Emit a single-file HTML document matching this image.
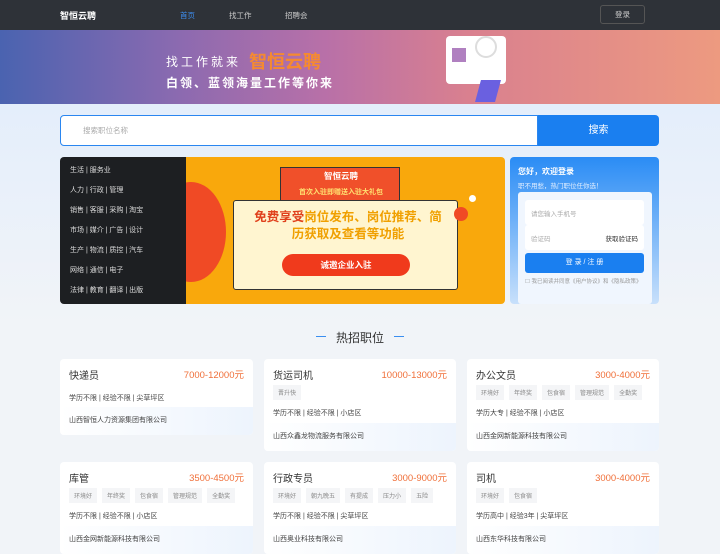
<!DOCTYPE html><html><head><meta charset="utf-8"><style>
*{margin:0;padding:0;box-sizing:border-box}
body{width:720px;height:540px;overflow:hidden;background:#f1f4f8;font-family:"Liberation Sans","Noto Sans CJK SC",sans-serif;position:relative;font-size:8px;color:#333}
.a{position:absolute}
.nav{left:0;top:0;width:720px;height:30px;background:#2e3238;color:#ccc}
.ban{left:0;top:30px;width:720px;height:74px;background:linear-gradient(90deg,#4a63b0 0%,#8c6ab0 25%,#b870a8 45%,#d9808f 65%,#ed9a80 100%)}
.card{background:#fff;border-radius:4px;overflow:hidden}
.card .t{position:absolute;left:9px;top:8px;font-size:10px;color:#333}
.card .p{position:absolute;right:9px;top:8px;font-size:9.5px;color:#f0703a}
.tags{position:absolute;left:9px;top:26px;display:flex;gap:5px}
.tags span{background:#f4f5f7;color:#888;font-size:6px;padding:3px 5px}
.info{position:absolute;left:9px;font-size:7px;color:#444}
.co{position:absolute;left:0;right:0;bottom:0;height:28px;background:linear-gradient(90deg,#fff,#edf4fd);font-size:7px;color:#444;padding:0 9px;line-height:28px}
.cat{left:70px;font-size:7px;color:#ddd}
</style></head><body>
<div class="a" style="left:0;top:104px;width:720px;height:220px;background:linear-gradient(180deg,#e4eefb,#f1f4f8)"></div>
<div class="a nav">
<div class="a" style="left:60px;top:9px;font-size:9px;font-weight:bold;color:#fff">智恒云聘</div>
<div class="a" style="left:180px;top:10px;font-size:7.5px;color:#3d8ef0">首页</div>
<div class="a" style="left:229px;top:10px;font-size:7.5px">找工作</div>
<div class="a" style="left:285px;top:10px;font-size:7.5px">招聘会</div>
<div class="a" style="left:600px;top:5px;width:45px;height:19px;border:1px solid #555;border-radius:3px;text-align:center;line-height:17px;font-size:7.5px">登录</div>
</div>
<div class="a ban">
<div class="a" style="left:166px;top:23px;font-size:12px;color:#fff;letter-spacing:3px">找工作就来</div>
<div class="a" style="left:249px;top:18px;font-size:18px;font-weight:bold;color:#f58a30">智恒云聘</div>
<div class="a" style="left:166px;top:44px;font-size:12px;color:#fff;font-weight:bold;letter-spacing:2px">白领、蓝领海量工作等你来</div>
<div class="a" style="left:446px;top:6px;width:60px;height:48px;background:#fff;border-radius:4px"></div>
<div class="a" style="left:475px;top:6px;width:22px;height:22px;border:2px solid #ddd;border-radius:50%"></div>
<div class="a" style="left:452px;top:18px;width:14px;height:14px;background:#b080c0"></div>
<div class="a" style="left:478px;top:50px;width:20px;height:22px;background:#6a60e0;transform:skewX(-15deg)"></div>
</div>
<div class="a" style="left:60px;top:115px;width:478px;height:31px;background:#fff;border:1px solid #2a86f0;border-radius:4px 0 0 4px;padding:9px 22px;font-size:7.5px;color:#aaa">搜索职位名称</div>
<div class="a" style="left:538px;top:115px;width:121px;height:31px;background:#1a7ff0;border-radius:0 4px 4px 0;color:#fff;text-align:center;line-height:31px;font-size:10px">搜索</div>
<div class="a" style="left:60px;top:157px;width:126px;height:147px;background:#1d1f22;border-radius:4px 0 0 4px"></div>
<div class="a cat" style="top:165px">生活 | 服务业</div>
<div class="a cat" style="top:185px">人力 | 行政 | 管理</div>
<div class="a cat" style="top:205px">销售 | 客服 | 采购 | 淘宝</div>
<div class="a cat" style="top:225px">市场 | 媒介 | 广告 | 设计</div>
<div class="a cat" style="top:245px">生产 | 物流 | 质控 | 汽车</div>
<div class="a cat" style="top:265px">网络 | 通信 | 电子</div>
<div class="a cat" style="top:285px">法律 | 教育 | 翻译 | 出版</div>
<div class="a" style="left:186px;top:157px;width:319px;height:147px;background:#f9a80c;border-radius:0 4px 4px 0;overflow:hidden">
<div class="a" style="left:-30px;top:25px;width:70px;height:100px;border-radius:50%;background:#f04a25"></div>
<div class="a" style="left:94px;top:10px;width:120px;height:42px;background:#f0502a;border:1px solid #333"></div>
<div class="a" style="left:120px;top:13px;font-size:8.5px;color:#fff;font-weight:bold;width:70px;text-align:center">智恒云聘</div>
<div class="a" style="left:100px;top:30px;font-size:7px;color:#ffe070;font-weight:bold;width:110px;text-align:center">首次入驻即赠送入驻大礼包</div>
<div class="a" style="left:47px;top:43px;width:225px;height:90px;background:#fff5d0;border:1.5px solid #333;border-radius:3px"></div>
<div class="a" style="left:64px;top:52px;font-size:12.5px;font-weight:bold;color:#e0401c;width:196px;text-align:center;line-height:17px">免费享受<span style="color:#f0a000">岗位发布、岗位推荐、简历获取及查看等功能</span></div>
<div class="a" style="left:96px;top:97px;width:128px;height:22px;background:#f03a1c;border-radius:11px;color:#fff;font-size:8.5px;font-weight:bold;text-align:center;line-height:22px">诚邀企业入驻</div>
<div class="a" style="left:283px;top:38px;width:7px;height:7px;border-radius:50%;background:#fff"></div>
<div class="a" style="left:268px;top:50px;width:14px;height:14px;border-radius:50%;background:#f04a25"></div>
</div>
<div class="a" style="left:510px;top:157px;width:149px;height:147px;background:linear-gradient(180deg,#2a8cf5,#c8e0fb);border-radius:4px">
<div class="a" style="left:8px;top:9px;font-size:8px;color:#fff;font-weight:bold">您好，欢迎登录</div>
<div class="a" style="left:8px;top:23px;font-size:6.5px;color:#e0eeff">职不用愁，热门职位任你选！</div>
<div class="a" style="left:8px;top:35px;width:134px;height:112px;background:#f0f6fe;border-radius:3px"></div>
<div class="a" style="left:15px;top:43px;width:119px;height:25px;background:#fff;border-radius:3px;padding:8px 6px;font-size:6.5px;color:#aaa">请您输入手机号</div>
<div class="a" style="left:15px;top:68px;width:119px;height:25px;background:#fff;border-radius:3px;padding:8px 6px;font-size:6.5px;color:#aaa">验证码<span style="float:right;color:#333">获取验证码</span></div>
<div class="a" style="left:15px;top:96px;width:119px;height:20px;background:#1a7ff0;border-radius:3px;color:#fff;font-size:7px;text-align:center;line-height:20px">登 录 / 注 册</div>
<div class="a" style="left:15px;top:120px;font-size:5.5px;color:#999;width:120px">☐ 我已阅读并同意《用户协议》和《隐私政策》</div>
</div>
<div class="a" style="left:316px;top:336px;width:10px;height:1px;background:#3a8ef0"></div>
<div class="a" style="left:394px;top:336px;width:10px;height:1px;background:#3a8ef0"></div>
<div class="a" style="left:336px;top:329px;font-size:12px;color:#333">热招职位</div>

<div class="a card" style="left:60px;top:359px;width:193px;height:76px"><div class="t">快递员</div><div class="p">7000-12000元</div><div class="info" style="top:34px">学历不限 | 经验不限 | 尖草坪区</div><div class="co">山西智恒人力资源集团有限公司</div></div>
<div class="a card" style="left:264px;top:359px;width:192px;height:92px"><div class="t">货运司机</div><div class="p">10000-13000元</div><div class="tags"><span>晋升快</span></div><div class="info" style="top:49px">学历不限 | 经验不限 | 小店区</div><div class="co">山西众鑫龙物流服务有限公司</div></div>
<div class="a card" style="left:467px;top:359px;width:192px;height:92px"><div class="t">办公文员</div><div class="p">3000-4000元</div><div class="tags"><span>环境好</span><span>年终奖</span><span>包食宿</span><span>管理规范</span><span>全勤奖</span></div><div class="info" style="top:49px">学历大专 | 经验不限 | 小店区</div><div class="co">山西金网新能源科技有限公司</div></div>
<div class="a card" style="left:60px;top:462px;width:193px;height:92px"><div class="t">库管</div><div class="p">3500-4500元</div><div class="tags"><span>环境好</span><span>年终奖</span><span>包食宿</span><span>管理规范</span><span>全勤奖</span></div><div class="info" style="top:49px">学历不限 | 经验不限 | 小店区</div><div class="co">山西金网新能源科技有限公司</div></div>
<div class="a card" style="left:264px;top:462px;width:192px;height:92px"><div class="t">行政专员</div><div class="p">3000-9000元</div><div class="tags"><span>环境好</span><span>朝九晚五</span><span>有提成</span><span>压力小</span><span>五险</span></div><div class="info" style="top:49px">学历不限 | 经验不限 | 尖草坪区</div><div class="co">山西奥业科技有限公司</div></div>
<div class="a card" style="left:467px;top:462px;width:192px;height:92px"><div class="t">司机</div><div class="p">3000-4000元</div><div class="tags"><span>环境好</span><span>包食宿</span></div><div class="info" style="top:49px">学历高中 | 经验3年 | 尖草坪区</div><div class="co">山西东华科技有限公司</div></div>
</body></html>
